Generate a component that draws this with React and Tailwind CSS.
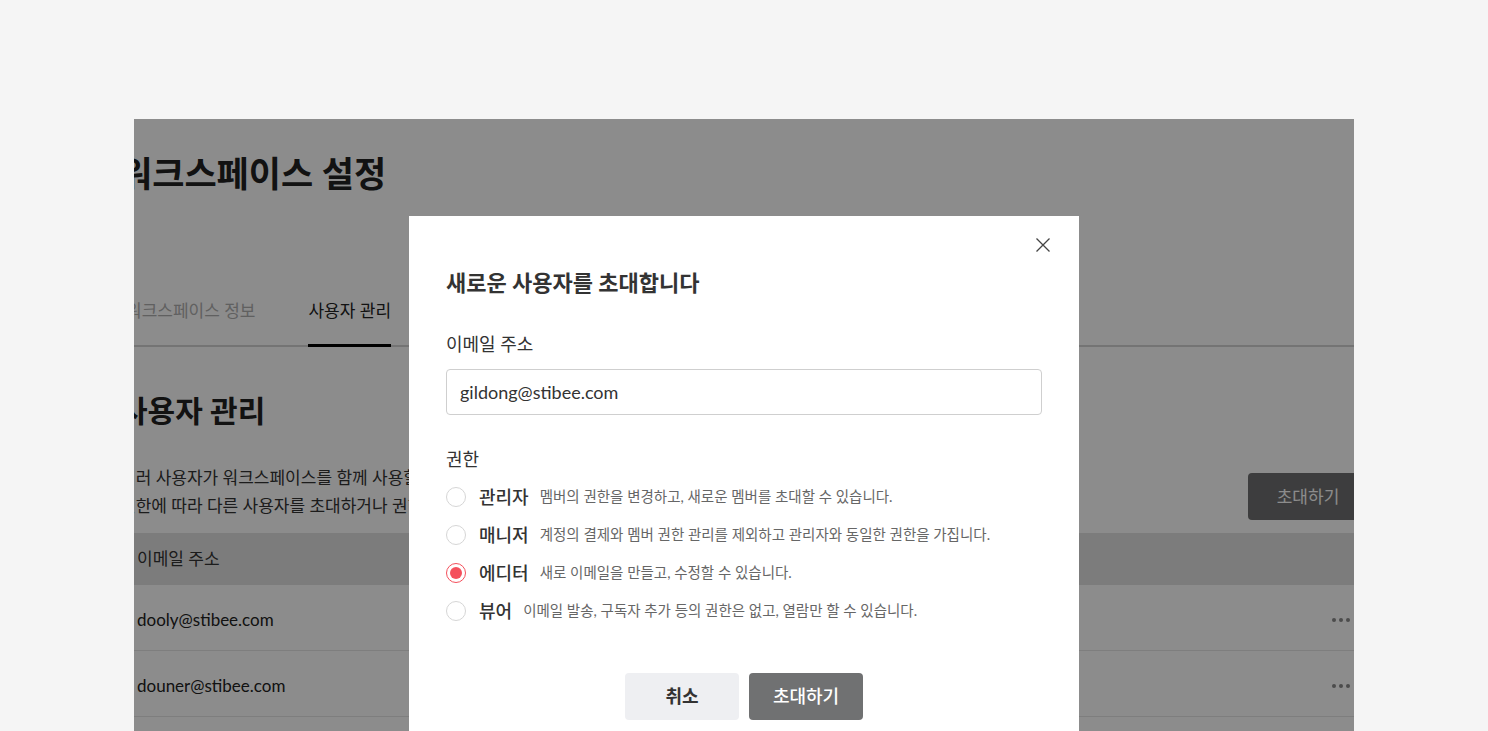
import React from "react";

const roles = [
    { name: "관리자", desc: "멤버의 권한을 변경하고, 새로운 멤버를 초대할 수 있습니다.", checked: false },
    { name: "매니저", desc: "계정의 결제와 멤버 권한 관리를 제외하고 관리자와 동일한 권한을 가집니다.", checked: false },
    { name: "에디터", desc: "새로 이메일을 만들고, 수정할 수 있습니다.", checked: true },
    { name: "뷰어", desc: "이메일 발송, 구독자 추가 등의 권한은 없고, 열람만 할 수 있습니다.", checked: false },
];

const members = ["dooly@stibee.com", "douner@stibee.com", "heedong@stibee.com"];

const Dots = () => (
    <div className="flex items-center gap-[3px]">
        <span className="w-[4px] h-[4px] rounded-full bg-[#8a8a8a]" />
        <span className="w-[4px] h-[4px] rounded-full bg-[#8a8a8a]" />
        <span className="w-[4px] h-[4px] rounded-full bg-[#8a8a8a]" />
    </div>
);

const Radio = ({ checked }) => (
    <span
        className={`w-[20px] h-[20px] rounded-full border flex items-center justify-center shrink-0 ${checked ? "border-[#f4505c]" : "border-[#d6d6d6]"}`}
    >
        {checked && <span className="w-[12px] h-[12px] rounded-full bg-[#f4505c]" />}
    </span>
);

const InviteModal = () => (
    <div className="absolute left-[275px] top-[97px] w-[670px] h-[560px] bg-white px-[37px] pt-[52px]">
        <button className="absolute right-[28px] top-[21px] w-[16px] h-[16px] text-[#444]">
            <svg viewBox="0 0 16 16" width="16" height="16" fill="none" stroke="currentColor" strokeWidth="1.3">
                <path d="M1.5 1.5 L14.5 14.5 M14.5 1.5 L1.5 14.5" />
            </svg>
        </button>
        <h2 className="text-[22px] leading-[30px] font-bold text-[#333]">새로운 사용자를 초대합니다</h2>

        <div className="mt-[33px] text-[18px] leading-[26px] text-[#333]">이메일 주소</div>
        <div className="mt-[12px] h-[46px] border border-[#cfcfcf] rounded-[4px] flex items-center px-[13px] text-[18px] text-[#333]">
            gildong@stibee.com
        </div>

        <div className="mt-[31px] text-[18px] leading-[26px] text-[#333]">권한</div>
        <div className="mt-[6px] flex flex-col">
            {roles.map((role, i) => (
                <label key={i} className="h-[38px] flex items-center">
                    <Radio checked={role.checked} />
                    <span className="ml-[13px] text-[18px] font-medium text-[#333]">{role.name}</span>
                    <span className="ml-[11px] text-[14.5px] text-[#666]">{role.desc}</span>
                </label>
            ))}
        </div>

        <div className="mt-[43px] flex justify-center gap-[10px]">
            <button className="w-[114px] h-[47px] rounded-[4px] bg-[#eeeff2] text-[18px] font-bold text-[#333]">
                취소
            </button>
            <button className="w-[114px] h-[47px] rounded-[4px] bg-[#707172] text-[18px] font-medium text-white">
                초대하기
            </button>
        </div>
    </div>
);

const App = () => {
    return (
        <div className="min-h-[731px] h-[731px] bg-[#f5f5f5] pt-[119px] pl-[134px] overflow-hidden font-['Lato','Noto_Sans_CJK_KR',sans-serif]">
            <div className="relative w-[1220px] h-[612px] overflow-hidden bg-white">
                <div className="ml-[-14px] w-[1248px] pt-[31px]">
                    <h1 className="text-[35px] leading-[46px] font-bold text-[#222]">워크스페이스 설정</h1>

                    <div className="mt-[103px] flex border-b-2 border-[#d4d4d4] text-[17px] leading-[24px]">
                        <div className="ml-[6px] pb-[21px] text-[#b0b0b0]">워크스페이스 정보</div>
                        <div className="ml-[53px] pb-[21px] border-b-[3px] border-black mb-[-2px] text-[#222]">
                            사용자 관리
                        </div>
                    </div>

                    <h2 className="mt-[44px] text-[30px] leading-[38px] font-bold text-[#222]">사용자 관리</h2>

                    <div className="mt-[35px] flex items-end justify-between">
                        <p className="text-[17px] leading-[28px] text-[#333]">
                            여러 사용자가 워크스페이스를 함께 사용할 수 있습니다.
                            <br />
                            권한에 따라 다른 사용자를 초대하거나 권한을 변경할 수 있습니다.
                        </p>
                        <button className="w-[120px] h-[47px] rounded-[4px] bg-[#6f7071] text-[17px] text-white">
                            초대하기
                        </button>
                    </div>

                    <div className="mt-[13px] h-[52px] bg-[#e2e2e2] flex items-center px-[17px] text-[17px] text-[#333]">
                        이메일 주소
                    </div>
                    {members.map((email, i) => (
                        <div key={i} className="h-[66px] flex items-center justify-between pl-[17px] pr-[18px] pt-[4px] border-b border-[#e6e6e6] text-[17px] text-[#222]">
                            <span>{email}</span>
                            <Dots />
                        </div>
                    ))}
                </div>

                <div className="absolute inset-0 bg-black/45" />
                <InviteModal />
            </div>
        </div>
    );
};

export default App;
